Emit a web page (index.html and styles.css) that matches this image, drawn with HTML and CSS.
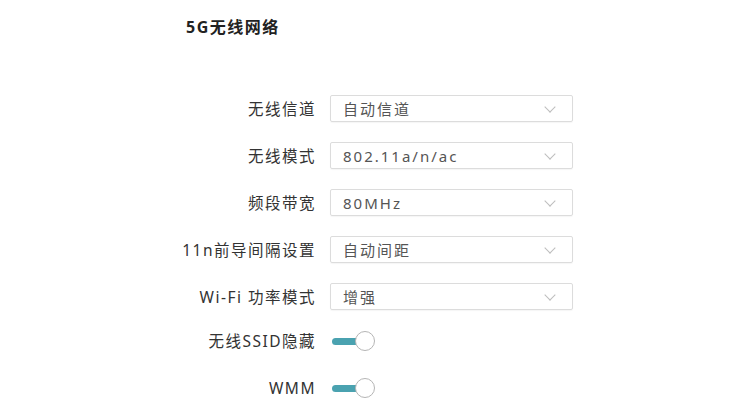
FILE: index.html
```html
<!DOCTYPE html>
<html lang="zh-CN">
<head>
  <meta charset="UTF-8">
  <meta name="viewport" content="width=device-width, initial-scale=1.0">
  <title>5G无线网络</title>
  <link rel="stylesheet" href="styles.css">
</head>
<body>

  <div class="container">
    <h1 class="title">5G无线网络</h1>

    <div class="form">
      <div class="row">
        <label class="label">无线信道</label>
        <div class="select"><span>自动信道</span><i class="chevron"></i></div>
      </div>
      <div class="row">
        <label class="label">无线模式</label>
        <div class="select"><span>802.11a/n/ac</span><i class="chevron"></i></div>
      </div>
      <div class="row">
        <label class="label">频段带宽</label>
        <div class="select"><span>80MHz</span><i class="chevron"></i></div>
      </div>
      <div class="row">
        <label class="label">11n前导间隔设置</label>
        <div class="select"><span>自动间距</span><i class="chevron"></i></div>
      </div>
      <div class="row">
        <label class="label">Wi-Fi 功率模式</label>
        <div class="select"><span>增强</span><i class="chevron"></i></div>
      </div>
      <div class="row switch-first">
        <label class="label">无线SSID隐藏</label>
        <div class="toggle"><span class="knob"></span></div>
      </div>
      <div class="row">
        <label class="label">WMM</label>
        <div class="toggle"><span class="knob"></span></div>
      </div>
    </div>
  </div>

</body>
</html>
```

FILE: styles.css
```css
body {
  margin: 0;
  background: #fff;
  color: #333;
  font-family: "Noto Sans", "Noto Sans CJK SC", sans-serif;
  overflow: hidden;
}

.container {
  padding: 16px 0 0 186px;
}

.title {
  margin: 0;
  font-size: 16px;
  line-height: 22px;
  font-weight: bold;
  letter-spacing: 1.5px;
  color: #222;
}

.form {
  margin-top: 57px;
  margin-left: -36px;
}

.row {
  display: flex;
  align-items: center;
  height: 27px;
  margin-bottom: 20px;
}

.switch-first {
  margin-top: -3px;
}

.label {
  width: 166px;
  margin-right: 14px;
  text-align: right;
  font-size: 15.5px;
  letter-spacing: 1.5px;
  color: #333;
}

.select {
  box-sizing: border-box;
  width: 243px;
  height: 27px;
  border: 1px solid #dcdcdc;
  border-radius: 2px;
  padding: 0 12px;
  display: flex;
  align-items: center;
  justify-content: space-between;
  font-size: 15px;
  letter-spacing: 2px;
  color: #555;
  box-shadow: 0 1px 1px rgba(0, 0, 0, 0.04);
}

.chevron {
  width: 7px;
  height: 7px;
  border-right: 1.2px solid #bdbdbd;
  border-bottom: 1.2px solid #bdbdbd;
  transform: rotate(45deg);
  margin: -4px 6px 0 0;
}

.toggle {
  position: relative;
  width: 47px;
  height: 22px;
}

.toggle::before {
  content: "";
  position: absolute;
  left: 2px;
  top: 8px;
  width: 30px;
  height: 7px;
  border-radius: 4px;
  background: #4aa2b0;
}

.knob {
  position: absolute;
  right: 2px;
  top: 1px;
  box-sizing: border-box;
  width: 20px;
  height: 20px;
  border-radius: 50%;
  background: #fff;
  border: 1.5px solid #b5b5b5;
}
```
